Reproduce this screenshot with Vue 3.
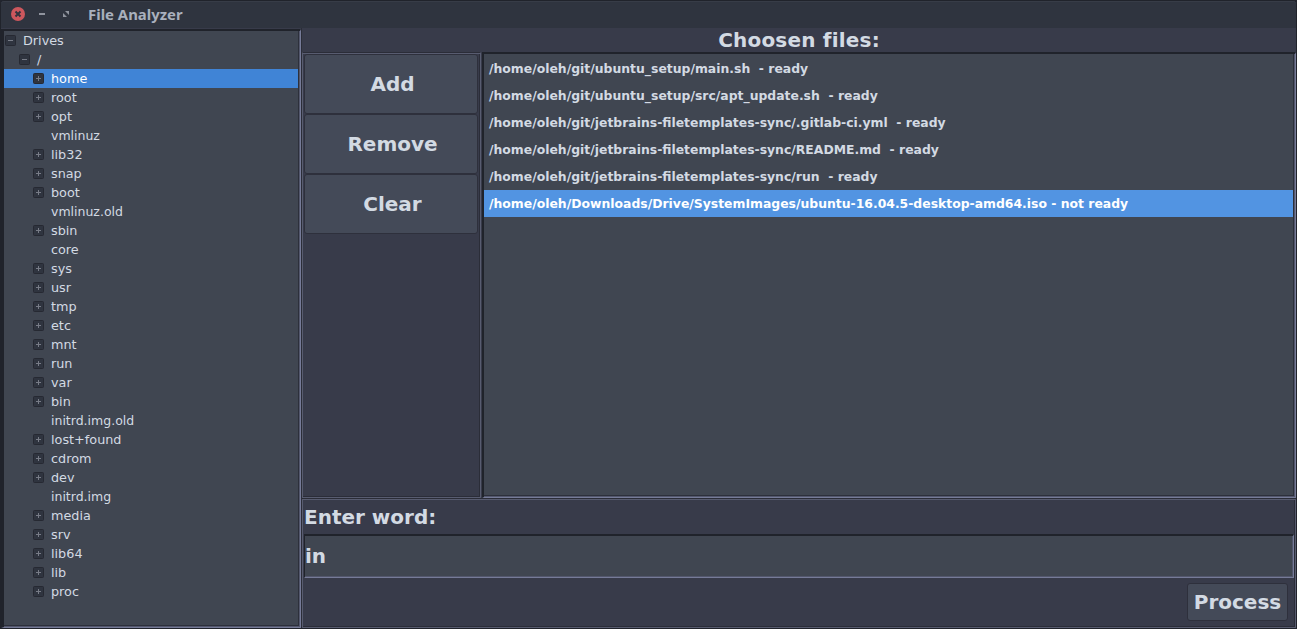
<script setup>
import { ref } from 'vue'

const leaves = ['vmlinuz', 'vmlinuz.old', 'core', 'initrd.img.old', 'initrd.img']
const names = ['home', 'root', 'opt', 'vmlinuz', 'lib32', 'snap', 'boot', 'vmlinuz.old', 'sbin', 'core', 'sys', 'usr', 'tmp', 'etc', 'mnt', 'run', 'var', 'bin', 'initrd.img.old', 'lost+found', 'cdrom', 'dev', 'initrd.img', 'media', 'srv', 'lib64', 'lib', 'proc']
const nodes = [
  { name: 'Drives', level: 0, open: true },
  { name: '/', level: 1, open: true },
  ...names.map((name) => ({ name, level: 2, leaf: leaves.includes(name) })),
]
const selectedNode = ref('home')

const files = [
  '/home/oleh/git/ubuntu_setup/main.sh  - ready',
  '/home/oleh/git/ubuntu_setup/src/apt_update.sh  - ready',
  '/home/oleh/git/jetbrains-filetemplates-sync/.gitlab-ci.yml  - ready',
  '/home/oleh/git/jetbrains-filetemplates-sync/README.md  - ready',
  '/home/oleh/git/jetbrains-filetemplates-sync/run  - ready',
  '/home/oleh/Downloads/Drive/SystemImages/ubuntu-16.04.5-desktop-amd64.iso - not ready',
]
const selectedFile = ref(5)
const word = ref('in')
</script>

<template>
  <div class="window">
    <header class="titlebar">
      <svg class="controls" width="80" height="28" viewBox="0 0 80 28">
        <circle cx="18" cy="14" r="7" fill="#cc575d" />
        <path d="M15.5 11.5l5 5M20.5 11.5l-5 5" stroke="#2f343f" stroke-width="2" />
        <path d="M39 14h6" stroke="#90949e" stroke-width="2" />
        <path d="M65 11h4v4zM63 13v4h4z" fill="#90949e" />
      </svg>
      <span class="title">File Analyzer</span>
    </header>
    <main class="body">
      <div class="tree">
        <div
          v-for="n in nodes"
          :key="n.name"
          class="node"
          :class="['level' + n.level, { selected: n.name === selectedNode, dotted: n.leaf && n.name !== 'core' }]"
          @click="selectedNode = n.name"
        >
          <span class="slot">
            <svg v-if="!n.leaf" width="11" height="11" viewBox="0 0 11 11">
              <rect x=".5" y=".5" width="10" height="10" rx="1" fill="#2f343f" stroke="#262932" />
              <path :d="n.open ? 'M3 5.5h5' : 'M3 5.5h5M5.5 3v5'" stroke="#787c87" />
            </svg>
          </span>
          <span>{{ n.name }}</span>
        </div>
      </div>
      <section class="right">
        <h1 class="heading">Choosen files:</h1>
        <div class="middle">
          <div class="actions">
            <button class="btn">Add</button>
            <button class="btn">Remove</button>
            <button class="btn">Clear</button>
          </div>
          <div class="list">
            <div
              v-for="(f, i) in files"
              :key="f"
              class="file"
              :class="{ active: i === selectedFile }"
              @click="selectedFile = i"
            >{{ f }}</div>
          </div>
        </div>
        <div class="search">
          <label class="label" for="word">Enter word:</label>
          <input id="word" v-model="word" class="entry" />
          <button class="btn process">Process</button>
        </div>
      </section>
    </main>
  </div>
</template>

<style>
body {
  margin: 0;
  background: #22252e;
  overflow: hidden;
}
</style>

<style scoped>
* {
  box-sizing: border-box;
}
.window {
  width: 1297px;
  height: 629px;
  display: flex;
  flex-direction: column;
  background: #383b4a;
  border: 1px solid #20232b;
  border-radius: 4px 4px 0 0;
  font-family: "DejaVu Sans", sans-serif;
  color: #d3dae3;
}
.titlebar {
  height: 27px;
  flex: none;
  display: flex;
  align-items: center;
  background: #2f343f;
  border-top: 1px solid #373c47;
  border-radius: 3px 3px 0 0;
}
.controls {
  flex: none;
  margin: -2px 7px 0 -1px;
}
.title {
  font: bold 14.9px/20px "Noto Sans", sans-serif;
  color: #a9b0bd;
  margin: -2px 0 0 1px;
  white-space: nowrap;
}
.body {
  flex: 1;
  min-height: 0;
  display: flex;
}
.tree {
  width: 300px;
  flex: none;
  margin-top: 1px;
  border-left: 3px solid #20232b;
  border-top: 2px solid #20232b;
  border-right: 1px solid #767b98;
  border-bottom: 1px solid #767b98;
  background: #404651;
  box-shadow: inset -1px -1px #53576c, inset -2px -2px #2d303b;
  font-size: 12.8px;
}
.node {
  height: 19px;
  line-height: 19px;
  display: flex;
  align-items: center;
  margin-right: 2px;
  white-space: nowrap;
}
.dotted {
  font-size: 12.5px;
}
.level0 {
  padding-left: 1px;
}
.level1 {
  padding-left: 15px;
}
.level2 {
  padding-left: 29px;
}
.selected {
  background: #4084d6;
  color: #fff;
}
.slot {
  width: 18px;
  height: 11px;
  display: flex;
}
.right {
  flex: 1;
  min-width: 0;
  display: flex;
  flex-direction: column;
  border-left: 1px solid #2b2d38;
}
.heading {
  height: 24px;
  flex: none;
  margin: 0;
  font-size: 20px;
  line-height: 24px;
  letter-spacing: 0.2px;
  text-align: center;
}
.middle {
  height: 446px;
  flex: none;
  display: flex;
}
.actions {
  width: 179px;
  flex: none;
  border: 1px solid #585c70;
  border-top-color: #2b2d38;
  box-shadow: inset 0 1px #585c70, inset -1px -1px #2b2d38;
  padding: 1px 2px 1px 1px;
  display: flex;
  flex-direction: column;
}
.btn {
  width: 100%;
  height: 60px;
  flex: none;
  padding: 0;
  border: 1px solid #2e303c;
  border-radius: 3px;
  background: #444a58;
  color: #d3dae3;
  font: bold 20px/24px "DejaVu Sans", sans-serif;
}
.actions .btn {
  padding-left: 3px;
}
.list {
  flex: 1;
  margin-left: 1px;
  border-left: 2px solid #20232b;
  border-top: 2px solid #20232b;
  border-right: 1px solid #767b98;
  border-bottom: 1px solid #767b98;
  box-shadow: inset -1px -1px #53576c, inset -2px -2px #2d303b;
  background: #404651;
  padding: 1px 2px 0 0;
}
.file {
  height: 27px;
  padding-left: 5px;
  font-size: 12.4px;
  font-weight: bold;
  line-height: 27px;
  white-space: pre;
}
.active {
  background: #5294e2;
  color: #fff;
}
.search {
  flex: 1;
  margin-top: 1px;
  display: flex;
  flex-direction: column;
  border: 1px solid #585c70;
  box-shadow: 0 -1px #2b2d38, inset -1px -1px #2b2d38;
  padding: 0 1px;
}
.label {
  height: 34px;
  font-size: 20px;
  font-weight: bold;
  line-height: 34px;
}
.entry {
  display: block;
  width: 100%;
  height: 44px;
  border: 0 solid;
  border-width: 2px 1px 1px 1px;
  border-color: #20232b #767b98 #767b98 #20232b;
  border-radius: 0;
  box-shadow: inset -1px -1px #53576c;
  outline: 0;
  padding: 0 1px 1px 0;
  background: #404651;
  color: #d3dae3;
  font: bold 20px "DejaVu Sans", sans-serif;
}
.process {
  align-self: flex-end;
  width: 101px;
  height: 38px;
  margin: 5px 6px 0 0;
}
</style>
